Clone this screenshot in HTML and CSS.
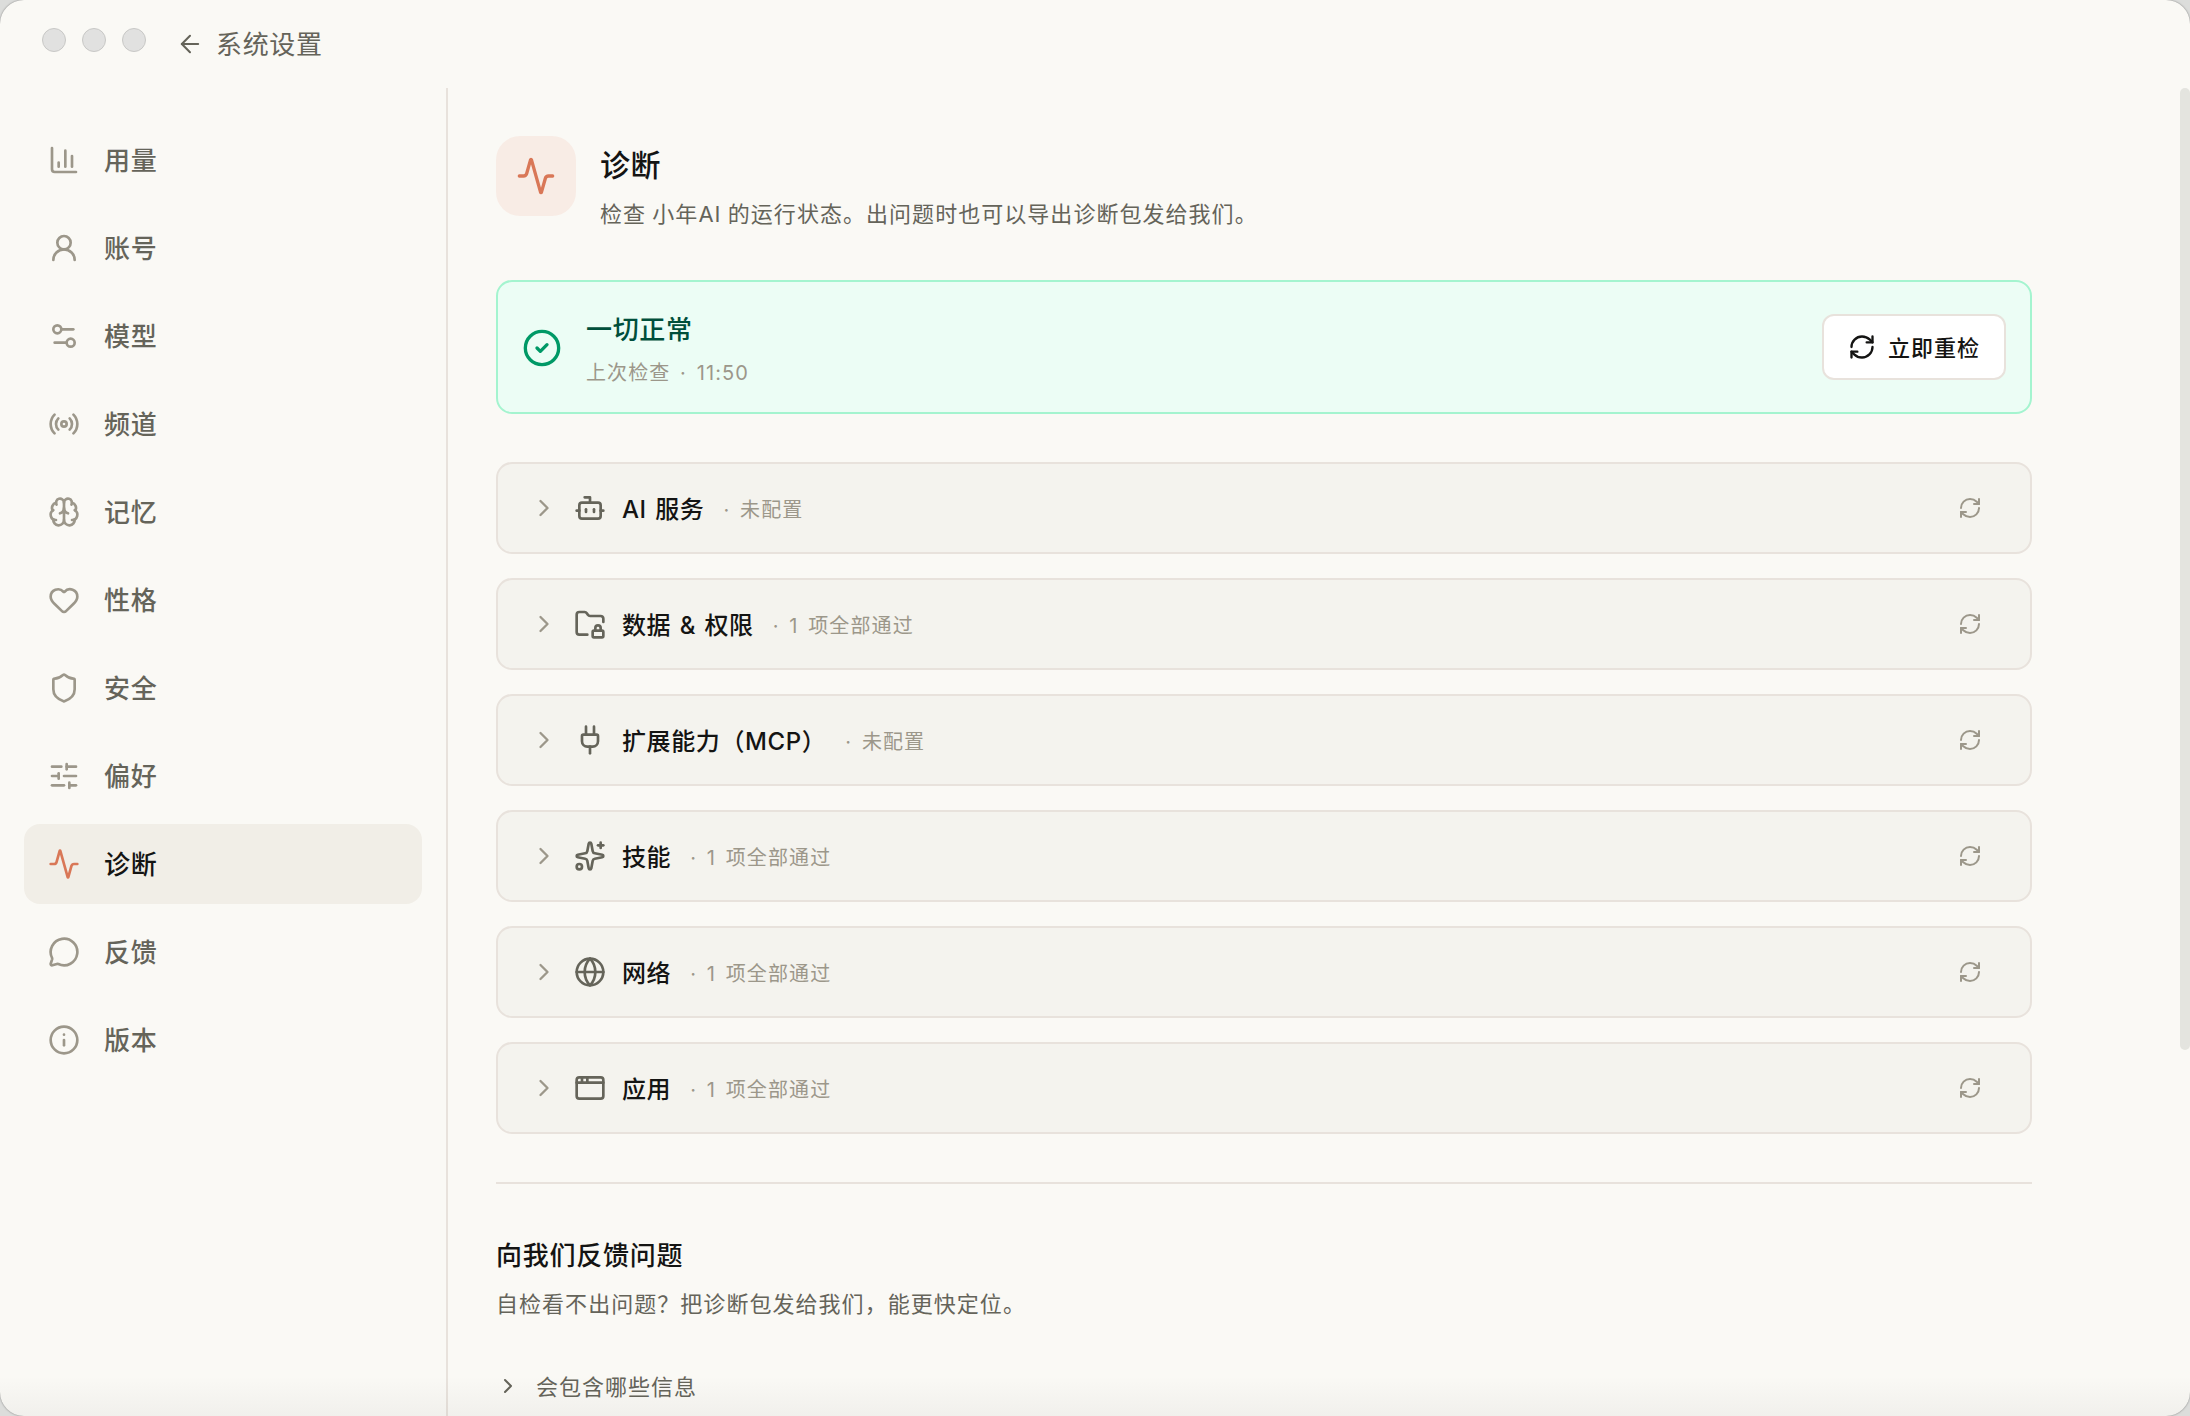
FILE: index.html
```html
<!DOCTYPE html>
<html lang="zh-CN">
<head>
<meta charset="utf-8">
<title>系统设置</title>
<link rel="stylesheet" href="styles.css">
</head>
<body>
<svg class="sprite" aria-hidden="true">
  <symbol id="i-back" viewBox="0 0 24 24"><path d="m12 19-7-7 7-7"/><path d="M19 12H5"/></symbol>
  <symbol id="i-chart" viewBox="0 0 24 24"><path d="M3 3v16a2 2 0 0 0 2 2h16"/><path d="M18 17V9"/><path d="M13 17V5"/><path d="M8 17v-3"/></symbol>
  <symbol id="i-user" viewBox="0 0 24 24"><circle cx="12" cy="8" r="5"/><path d="M20 21a8 8 0 0 0-16 0"/></symbol>
  <symbol id="i-model" viewBox="0 0 24 24"><path d="M14 17H5"/><path d="M19 7h-9"/><circle cx="17" cy="17" r="3"/><circle cx="7" cy="7" r="3"/></symbol>
  <symbol id="i-radio" viewBox="0 0 24 24"><path d="M16.247 7.761a6 6 0 0 1 0 8.478"/><path d="M19.075 4.933a10 10 0 0 1 0 14.134"/><path d="M4.925 19.067a10 10 0 0 1 0-14.134"/><path d="M7.753 16.239a6 6 0 0 1 0-8.478"/><circle cx="12" cy="12" r="2"/></symbol>
  <symbol id="i-brain" viewBox="0 0 24 24"><path d="M12 18V5"/><path d="M15 13a4.17 4.17 0 0 1-3-4 4.17 4.17 0 0 1-3 4"/><path d="M17.598 6.5A3 3 0 1 0 12 5a3 3 0 1 0-5.598 1.5"/><path d="M17.997 5.125a4 4 0 0 1 2.526 5.77"/><path d="M18 18a4 4 0 0 0 2-7.464"/><path d="M19.967 17.483A4 4 0 1 1 12 18a4 4 0 1 1-7.967-.517"/><path d="M6 18a4 4 0 0 1-2-7.464"/><path d="M6.003 5.125a4 4 0 0 0-2.526 5.77"/></symbol>
  <symbol id="i-heart" viewBox="0 0 24 24"><path d="M2 9.5a5.5 5.5 0 0 1 9.591-3.676.56.56 0 0 0 .818 0A5.49 5.49 0 0 1 22 9.5c0 2.29-1.5 4-3 5.5l-5.492 5.313a2 2 0 0 1-3 .019L5 15c-1.5-1.5-3-3.2-3-5.5"/></symbol>
  <symbol id="i-shield" viewBox="0 0 24 24"><path d="M20 13c0 5-3.5 7.5-7.66 8.95a1 1 0 0 1-.67-.01C7.5 20.5 4 18 4 13V6a1 1 0 0 1 1-1c2 0 4.5-1.2 6.24-2.72a1.17 1.17 0 0 1 1.52 0C14.51 3.81 17 5 19 5a1 1 0 0 1 1 1z"/></symbol>
  <symbol id="i-sliders" viewBox="0 0 24 24"><path d="M10 5H3"/><path d="M12 19H3"/><path d="M14 3v4"/><path d="M16 17v4"/><path d="M21 12h-9"/><path d="M21 19h-5"/><path d="M21 5h-7"/><path d="M8 10v4"/><path d="M8 12H3"/></symbol>
  <symbol id="i-activity" viewBox="0 0 24 24"><path d="M22 12h-2.48a2 2 0 0 0-1.93 1.46l-2.35 8.36a.25.25 0 0 1-.48 0L9.24 2.18a.25.25 0 0 0-.48 0l-2.35 8.36A2 2 0 0 1 4.49 12H2"/></symbol>
  <symbol id="i-message" viewBox="0 0 24 24"><path d="M2.992 16.342a2 2 0 0 1 .094 1.167l-1.065 3.29a1 1 0 0 0 1.236 1.168l3.413-.998a2 2 0 0 1 1.099.092 10 10 0 1 0-4.777-4.719"/></symbol>
  <symbol id="i-info" viewBox="0 0 24 24"><circle cx="12" cy="12" r="10"/><path d="M12 16v-4"/><path d="M12 8h.01"/></symbol>
  <symbol id="i-check" viewBox="0 0 24 24"><circle cx="12" cy="12" r="10"/><path d="m9 12 2 2 4-4"/></symbol>
  <symbol id="i-refresh" viewBox="0 0 24 24"><path d="M3 12a9 9 0 0 1 9-9 9.75 9.75 0 0 1 6.74 2.74L21 8"/><path d="M21 3v5h-5"/><path d="M21 12a9 9 0 0 1-9 9 9.75 9.75 0 0 1-6.74-2.74L3 16"/><path d="M8 16H3v5"/></symbol>
  <symbol id="i-chevron" viewBox="0 0 24 24"><path d="m9 18 6-6-6-6"/></symbol>
  <symbol id="i-bot" viewBox="0 0 24 24"><path d="M12 8V4H8"/><rect width="16" height="12" x="4" y="8" rx="2"/><path d="M2 14h2"/><path d="M20 14h2"/><path d="M15 13v2"/><path d="M9 13v2"/></symbol>
  <symbol id="i-folder" viewBox="0 0 24 24"><rect width="8" height="5" x="14" y="17" rx="1"/><path d="M10 20H4a2 2 0 0 1-2-2V5a2 2 0 0 1 2-2h3.9a2 2 0 0 1 1.69.9l.81 1.2a2 2 0 0 0 1.67.9H20a2 2 0 0 1 2 2v2.5"/><path d="M20 17v-2a2 2 0 1 0-4 0v2"/></symbol>
  <symbol id="i-plug" viewBox="0 0 24 24"><path d="M12 22v-5"/><path d="M15 8V2"/><path d="M17 8a1 1 0 0 1 1 1v4a4 4 0 0 1-4 4h-4a4 4 0 0 1-4-4V9a1 1 0 0 1 1-1z"/><path d="M9 8V2"/></symbol>
  <symbol id="i-sparkles" viewBox="0 0 24 24"><path d="M11.017 2.814a1 1 0 0 1 1.966 0l1.051 5.558a2 2 0 0 0 1.594 1.594l5.558 1.051a1 1 0 0 1 0 1.966l-5.558 1.051a2 2 0 0 0-1.594 1.594l-1.051 5.558a1 1 0 0 1-1.966 0l-1.051-5.558a2 2 0 0 0-1.594-1.594l-5.558-1.051a1 1 0 0 1 0-1.966l5.558-1.051a2 2 0 0 0 1.594-1.594z"/><path d="M20 2v4"/><path d="M22 4h-4"/><circle cx="4" cy="20" r="2"/></symbol>
  <symbol id="i-globe" viewBox="0 0 24 24"><circle cx="12" cy="12" r="10"/><path d="M12 2a14.5 14.5 0 0 0 0 20 14.5 14.5 0 0 0 0-20"/><path d="M2 12h20"/></symbol>
  <symbol id="i-window" viewBox="0 0 24 24"><rect x="2" y="4" width="20" height="16" rx="2"/><path d="M10 4v4"/><path d="M2 8h20"/><path d="M6 4v4"/></symbol>
</svg>

<div class="window">
  <header class="titlebar">
    <div class="lights"><i></i><i></i><i></i></div>
    <a class="back"><svg class="icon icon-28"><use href="#i-back"/></svg><span>系统设置</span></a>
  </header>

  <div class="body">
    <nav class="sidebar">
      <a class="nav-item"><svg class="icon icon-32"><use href="#i-chart"/></svg><span>用量</span></a>
      <a class="nav-item"><svg class="icon icon-32"><use href="#i-user"/></svg><span>账号</span></a>
      <a class="nav-item"><svg class="icon icon-32"><use href="#i-model"/></svg><span>模型</span></a>
      <a class="nav-item"><svg class="icon icon-32"><use href="#i-radio"/></svg><span>频道</span></a>
      <a class="nav-item"><svg class="icon icon-32"><use href="#i-brain"/></svg><span>记忆</span></a>
      <a class="nav-item"><svg class="icon icon-32"><use href="#i-heart"/></svg><span>性格</span></a>
      <a class="nav-item"><svg class="icon icon-32"><use href="#i-shield"/></svg><span>安全</span></a>
      <a class="nav-item"><svg class="icon icon-32"><use href="#i-sliders"/></svg><span>偏好</span></a>
      <a class="nav-item active"><svg class="icon icon-32"><use href="#i-activity"/></svg><span>诊断</span></a>
      <a class="nav-item"><svg class="icon icon-32"><use href="#i-message"/></svg><span>反馈</span></a>
      <a class="nav-item"><svg class="icon icon-32"><use href="#i-info"/></svg><span>版本</span></a>
    </nav>

    <main class="content">
      <section class="hero">
        <div class="hero-tile"><svg class="icon icon-40"><use href="#i-activity"/></svg></div>
        <div class="hero-text">
          <h1>诊断</h1>
          <p class="desc">检查 小年AI 的运行状态。出问题时也可以导出诊断包发给我们。</p>
        </div>
      </section>

      <section class="banner">
        <svg class="icon icon-40"><use href="#i-check"/></svg>
        <div class="banner-text">
          <strong>一切正常</strong>
          <span>上次检查 · 11:50</span>
        </div>
        <button class="recheck"><svg class="icon icon-28"><use href="#i-refresh"/></svg><span>立即重检</span></button>
      </section>

      <section class="groups">
        <div class="group"><svg class="icon icon-28 chevron"><use href="#i-chevron"/></svg><svg class="icon icon-32"><use href="#i-bot"/></svg><span class="name">AI 服务</span><span class="state">· 未配置</span><svg class="icon icon-24 rerun"><use href="#i-refresh"/></svg></div>
        <div class="group"><svg class="icon icon-28 chevron"><use href="#i-chevron"/></svg><svg class="icon icon-32"><use href="#i-folder"/></svg><span class="name">数据 &amp; 权限</span><span class="state">· 1 项全部通过</span><svg class="icon icon-24 rerun"><use href="#i-refresh"/></svg></div>
        <div class="group"><svg class="icon icon-28 chevron"><use href="#i-chevron"/></svg><svg class="icon icon-32"><use href="#i-plug"/></svg><span class="name">扩展能力（MCP）</span><span class="state">· 未配置</span><svg class="icon icon-24 rerun"><use href="#i-refresh"/></svg></div>
        <div class="group"><svg class="icon icon-28 chevron"><use href="#i-chevron"/></svg><svg class="icon icon-32"><use href="#i-sparkles"/></svg><span class="name">技能</span><span class="state">· 1 项全部通过</span><svg class="icon icon-24 rerun"><use href="#i-refresh"/></svg></div>
        <div class="group"><svg class="icon icon-28 chevron"><use href="#i-chevron"/></svg><svg class="icon icon-32"><use href="#i-globe"/></svg><span class="name">网络</span><span class="state">· 1 项全部通过</span><svg class="icon icon-24 rerun"><use href="#i-refresh"/></svg></div>
        <div class="group"><svg class="icon icon-28 chevron"><use href="#i-chevron"/></svg><svg class="icon icon-32"><use href="#i-window"/></svg><span class="name">应用</span><span class="state">· 1 项全部通过</span><svg class="icon icon-24 rerun"><use href="#i-refresh"/></svg></div>
      </section>

      <section class="feedback">
        <h2>向我们反馈问题</h2>
        <p class="desc">自检看不出问题？把诊断包发给我们，能更快定位。</p>
        <div class="disclosure"><svg class="icon icon-24"><use href="#i-chevron"/></svg><span>会包含哪些信息</span></div>
      </section>
    </main>
  </div>
  <div class="fade"></div>
  <div class="scrollbar"></div>
</div>
</body>
</html>
```

FILE: styles.css
```css
:root {
  --bg: #faf9f5;
  --line: #e8e2dc;
  --ink: #141413;
  --text: #65645a;
  --muted: #9c978a;
  --accent: #d97757;
}

* { box-sizing: border-box; }

body {
  margin: 0;
  width: 2190px;
  height: 1416px;
  overflow: hidden;
  background: #dcdddb;
  color: var(--ink);
  font-family: Inter, "Noto Sans CJK SC", sans-serif;
}

h1, h2, p { margin: 0; }

.sprite { position: absolute; width: 0; height: 0; }

.icon {
  flex: none;
  fill: none;
  stroke: currentColor;
  stroke-width: 2;
  stroke-linecap: round;
  stroke-linejoin: round;
}
.icon-24 { width: 24px; height: 24px; }
.icon-28 { width: 28px; height: 28px; }
.icon-32 { width: 32px; height: 32px; }
.icon-40 { width: 40px; height: 40px; }

.window {
  position: relative;
  display: flex;
  flex-direction: column;
  height: 1416px;
  overflow: hidden;
  border-radius: 24px;
  background: var(--bg);
  box-shadow: 0 0 2px #777;
}

/* Title bar */
.titlebar {
  display: flex;
  flex: none;
  height: 88px;
  padding-left: 42px;
}
.lights { display: flex; gap: 16px; padding-top: 28px; }
.lights i {
  width: 24px;
  height: 24px;
  border: 1px solid #c8c8c6;
  border-radius: 50%;
  background: #e1e1e0;
}
.back {
  display: flex;
  align-items: center;
  height: 88px;
  margin-left: 30px;
  gap: 12px;
  color: var(--text);
  font-size: 26px;
  letter-spacing: 0.67px;
}
.back .icon { stroke-width: 1.75; }
.back span, .nav-item span { padding-bottom: 3px; }

.body { display: flex; flex: 1; min-height: 0; }

/* Sidebar */
.sidebar {
  display: flex;
  flex: none;
  flex-direction: column;
  gap: 8px;
  width: 448px;
  padding: 32px 24px;
  border-right: 2px solid var(--line);
}
.nav-item {
  display: flex;
  align-items: center;
  gap: 24px;
  height: 80px;
  padding: 0 24px;
  border-radius: 16px;
  color: var(--text);
  font-size: 26px;
  font-weight: 500;
  letter-spacing: 0.67px;
}
.nav-item .icon { color: var(--muted); }
.nav-item.active { background: #f1eee7; color: var(--ink); }
.nav-item.active .icon { color: var(--accent); }

/* Main column */
.content { width: 1584px; padding: 48px 0 0 48px; }

.hero { display: flex; gap: 24px; height: 80px; }
.hero-tile {
  display: grid;
  place-items: center;
  width: 80px;
  height: 80px;
  border-radius: 24px;
  background: #f8ece5;
  color: var(--accent);
}
.hero-tile .icon { stroke-width: 2; }
.hero-text { padding-top: 8px; }
h1 {
  font-size: 30px;
  font-weight: 500;
  line-height: 42px;
  letter-spacing: 0.6px;
}
.desc {
  color: var(--text);
  font-size: 22px;
  line-height: 36px;
  letter-spacing: 1.04px;
}
.hero .desc { margin-top: 10px; word-spacing: -1px; }

.banner {
  display: flex;
  align-items: center;
  gap: 24px;
  height: 134px;
  margin-top: 64px;
  padding: 0 24px;
  border: 2px solid #a4f4cf;
  border-radius: 16px;
  background: #ecfdf5;
  color: #009966;
}
.banner > .icon { margin-top: 2px; }
.banner-text {
  display: flex;
  flex: 1;
  flex-direction: column;
  gap: 7px;
  padding-top: 5px;
}
.banner-text strong {
  color: #004f3b;
  font-size: 26px;
  font-weight: 500;
  line-height: 40px;
  letter-spacing: 0.67px;
}
.banner-text span {
  color: var(--muted);
  font-size: 20px;
  line-height: 32px;
  letter-spacing: 1.1px;
  word-spacing: 3px;
}
.recheck {
  display: flex;
  align-items: center;
  gap: 12px;
  height: 66px;
  padding: 0 24px;
  border: 2px solid var(--line);
  border-radius: 12px;
  background: #fff;
  color: var(--ink);
  font: 500 22px Inter, "Noto Sans CJK SC", sans-serif;
  letter-spacing: 1px;
}
.recheck span { padding-bottom: 2px; }

.groups { display: flex; flex-direction: column; gap: 24px; margin-top: 48px; }
.group {
  display: flex;
  align-items: center;
  gap: 16px;
  height: 92px;
  padding: 0 48px 0 32px;
  border: 2px solid var(--line);
  border-radius: 16px;
  background: #f4f3ee;
  color: var(--text);
}
.group .chevron, .group .rerun, .state { color: var(--muted); }
.name {
  padding-bottom: 2px;
  color: var(--ink);
  font-size: 24px;
  font-weight: 500;
  letter-spacing: 0.6px;
  word-spacing: 1.5px;
}
.state {
  margin-left: 3px;
  font-size: 20px;
  letter-spacing: 1.1px;
  word-spacing: 3px;
}
.rerun { margin-left: auto; }

.feedback {
  margin-top: 48px;
  padding-top: 52px;
  border-top: 2px solid var(--line);
}
h2 {
  font-size: 26px;
  font-weight: 500;
  line-height: 40px;
  letter-spacing: 0.75px;
}
.feedback .desc { margin-top: 10px; }
.disclosure {
  display: flex;
  align-items: center;
  gap: 16px;
  height: 36px;
  margin-top: 46px;
  color: var(--text);
  font-size: 22px;
  letter-spacing: 1px;
}
.disclosure span { padding-bottom: 3px; }

/* Overlays */
.fade {
  position: absolute;
  right: 0;
  bottom: 0;
  left: 0;
  height: 40px;
  background: linear-gradient(rgba(20, 20, 19, 0), rgba(20, 20, 19, 0.04));
}
.scrollbar {
  position: absolute;
  top: 88px;
  right: 0;
  width: 10px;
  height: 962px;
  border-radius: 5px;
  background: #e4e4df;
}
```
